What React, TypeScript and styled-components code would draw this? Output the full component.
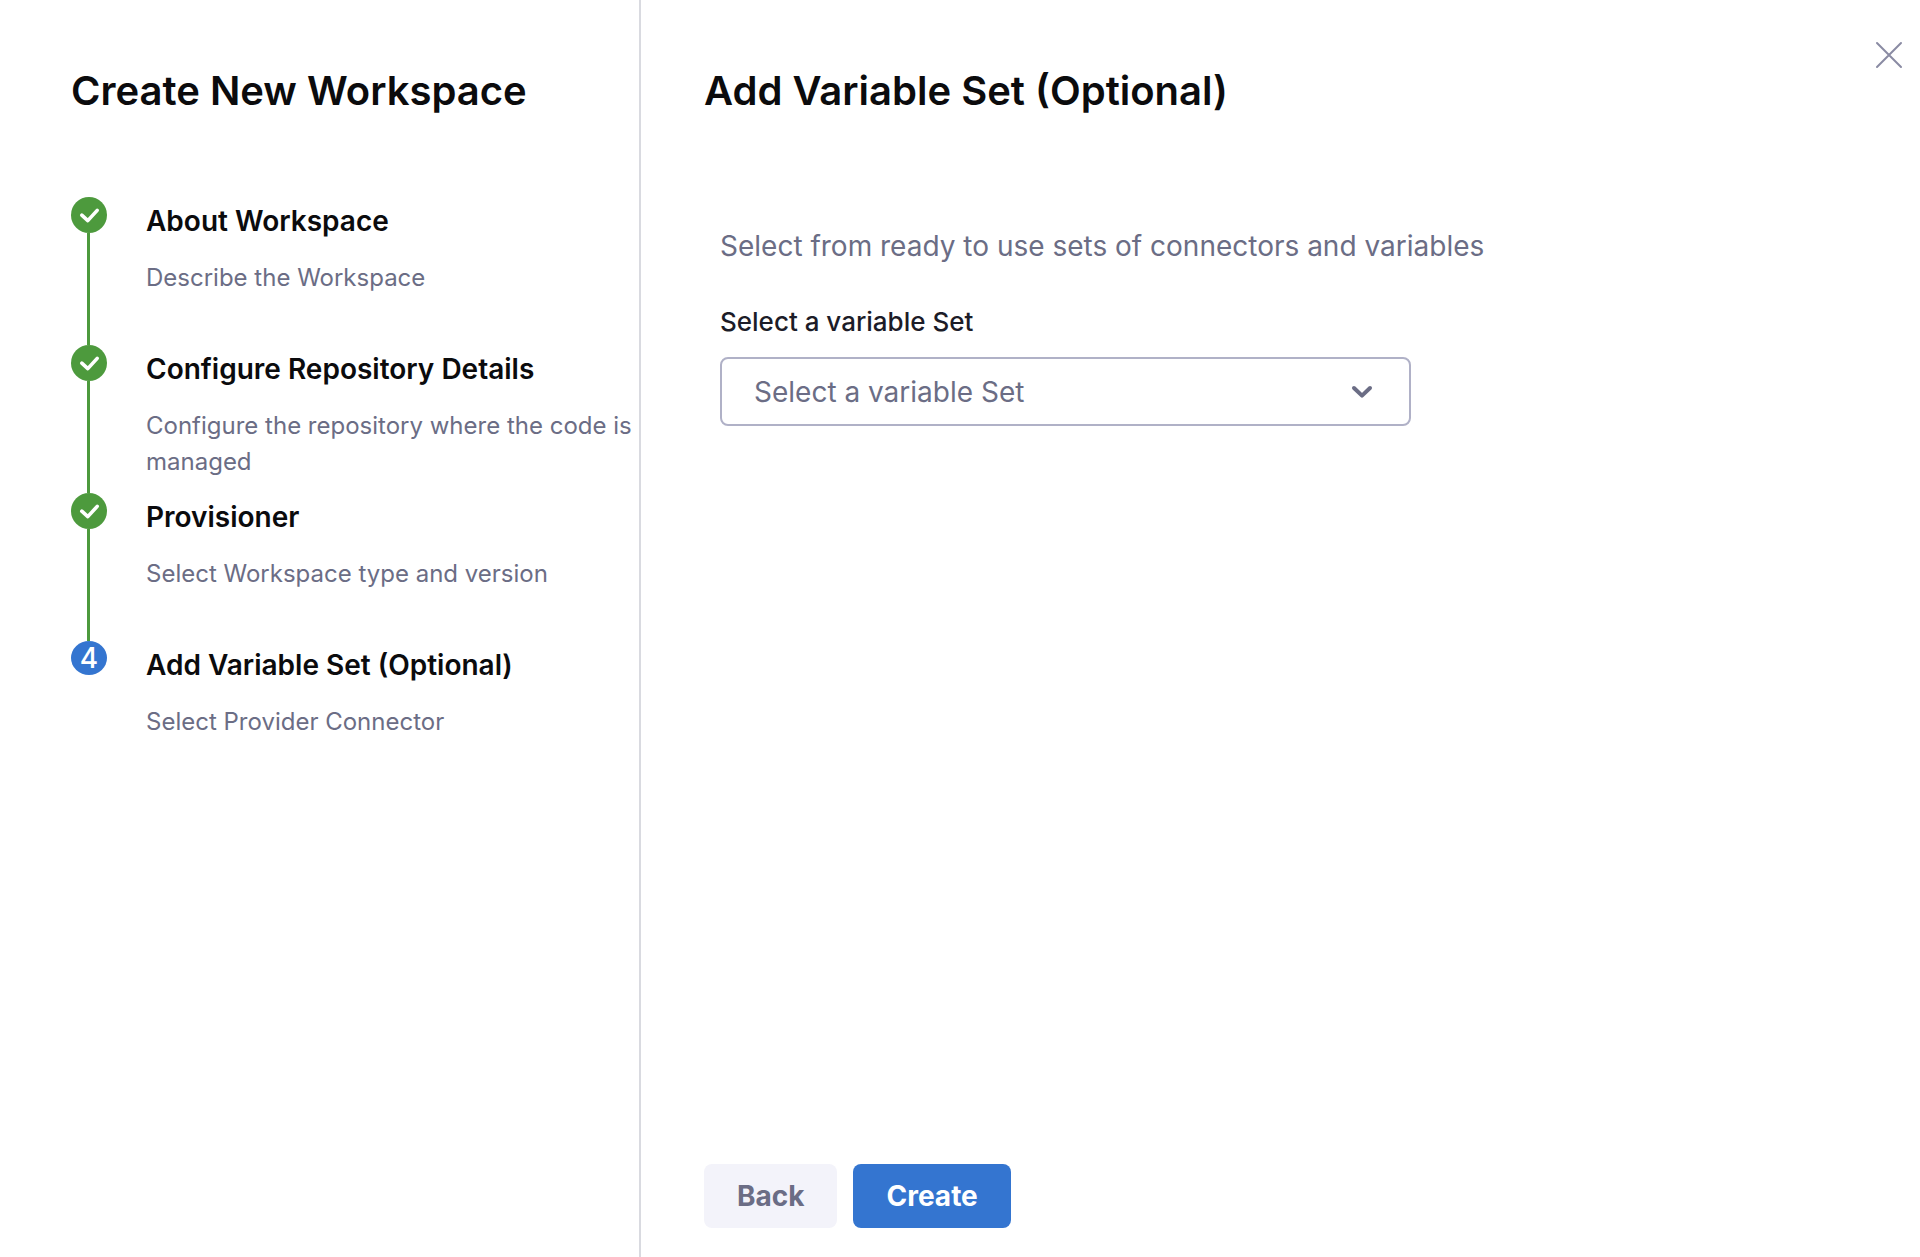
import React from "react";
import styled, { createGlobalStyle } from "styled-components";

const GlobalStyle = createGlobalStyle`
  *, *::before, *::after { box-sizing: border-box; }
  body {
    margin: 0;
    background: #ffffff;
    color: #0b0b0d;
    font-family: Inter, "Liberation Sans", sans-serif;
  }
`;

const Page = styled.div`
  display: flex;
  min-height: 100vh;
`;

const Sidebar = styled.aside`
  flex: 0 0 calc(100% / 3 + 1px);
  padding: 67px 0 48px 71px;
  border-right: 2px solid #d9dae0;
`;

const Heading = styled.h1`
  margin: 0;
  font-size: 40px;
  line-height: 48px;
  font-weight: 600;
`;

const Steps = styled.ol`
  list-style: none;
  margin: 82px 0 0;
  padding: 0;
`;

const Step = styled.li`
  display: flex;
  gap: 39px;
  min-height: 148px;
`;

const Rail = styled.div`
  flex: 0 0 36px;
  display: flex;
  flex-direction: column;
  align-items: center;
`;

const Marker = styled.span<{ $current?: boolean }>`
  display: flex;
  align-items: center;
  justify-content: center;
  width: 36px;
  height: ${(p) => (p.$current ? 34 : 36)}px;
  border-radius: 50%;
  background: ${(p) => (p.$current ? "#3475d0" : "#4d9a3d")};
  color: #ffffff;
  font-size: 28px;
  line-height: 34px;
  font-weight: 500;
`;

const Connector = styled.span`
  flex: 1;
  width: 3px;
  margin-right: 1px;
  background: #4d9a3d;
`;

const StepText = styled.div`
  flex: 1;
  padding-top: 6px;
`;

const StepTitle = styled.h2`
  margin: 0 0 21px;
  font-size: 28px;
  line-height: 36px;
  font-weight: 600;
`;

const StepDescription = styled.p`
  margin: 0;
  font-size: 24px;
  line-height: 36px;
  color: #6b6d85;
`;

const Main = styled.main`
  flex: 1;
  display: flex;
  flex-direction: column;
  padding: 67px 64px 29px 63px;
`;

const CloseButton = styled.button`
  position: absolute;
  top: 40px;
  right: 16px;
  display: flex;
  padding: 0;
  border: 0;
  background: none;
  color: #8a8ba3;
  cursor: pointer;
`;

const Form = styled.form`
  flex: 1;
  display: flex;
  flex-direction: column;
`;

const Fields = styled.div`
  flex: 1;
  padding: 113px 0 48px 16px;
`;

const Intro = styled.p`
  margin: 0 0 40px;
  font-size: 28px;
  line-height: 36px;
  color: #6b6d85;
`;

const FieldLabel = styled.label`
  display: block;
  margin-bottom: 17px;
  font-size: 26px;
  line-height: 36px;
  font-weight: 500;
  color: #1c1c28;
`;

const SelectBox = styled.div`
  position: relative;
  max-width: 691px;

  svg {
    position: absolute;
    top: 28px;
    right: 37px;
    pointer-events: none;
  }
`;

const Select = styled.select`
  appearance: none;
  display: block;
  width: 100%;
  height: 69px;
  padding: 0 80px 0 32px;
  border: 2px solid #b0b1c7;
  border-radius: 8px;
  background: #ffffff;
  color: #6b6d85;
  font: 400 28px Inter, "Liberation Sans", sans-serif;
`;

const Footer = styled.footer`
  display: flex;
  gap: 16px;
`;

const Button = styled.button<{ $primary?: boolean }>`
  height: 64px;
  padding: 0 33px;
  border: 0;
  border-radius: 8px;
  background: ${(p) => (p.$primary ? "#3475d0" : "#f3f3fa")};
  color: ${(p) => (p.$primary ? "#ffffff" : "#6b6d85")};
  font: 700 28px Inter, "Liberation Sans", sans-serif;
  cursor: pointer;
`;

const steps = [
  { title: "About Workspace", description: "Describe the Workspace", done: true },
  {
    title: "Configure Repository Details",
    description: "Configure the repository where the code is managed",
    done: true,
  },
  { title: "Provisioner", description: "Select Workspace type and version", done: true },
  { title: "Add Variable Set (Optional)", description: "Select Provider Connector", done: false },
];

const CheckIcon = () => (
  <svg width="36" height="36" viewBox="0 0 36 36" fill="none" aria-hidden="true">
    <path
      d="M10.8 18.2L16.8 23.6L26.2 13.4"
      stroke="currentColor"
      strokeWidth="3.6"
      strokeLinecap="round"
      strokeLinejoin="round"
    />
  </svg>
);

export default function App() {
  return (
    <Page>
      <GlobalStyle />
      <Sidebar>
        <Heading>Create New Workspace</Heading>
        <Steps>
          {steps.map((step, i) => (
            <Step key={step.title} aria-current={step.done ? undefined : "step"}>
              <Rail>
                <Marker $current={!step.done}>{step.done ? <CheckIcon /> : i + 1}</Marker>
                {step.done && <Connector />}
              </Rail>
              <StepText>
                <StepTitle>{step.title}</StepTitle>
                <StepDescription>{step.description}</StepDescription>
              </StepText>
            </Step>
          ))}
        </Steps>
      </Sidebar>
      <Main>
        <Heading as="h2">Add Variable Set (Optional)</Heading>
        <Form onSubmit={(e) => e.preventDefault()}>
          <Fields>
            <Intro>Select from ready to use sets of connectors and variables</Intro>
            <FieldLabel htmlFor="variable-set">Select a variable Set</FieldLabel>
            <SelectBox>
              <Select id="variable-set">
                <option>Select a variable Set</option>
              </Select>
              <svg width="24" height="14" viewBox="0 0 24 14" fill="none" aria-hidden="true">
                <path
                  d="M4 3L12 10.6L20 3"
                  stroke="#6b6d85"
                  strokeWidth="4"
                  strokeLinecap="round"
                  strokeLinejoin="round"
                />
              </svg>
            </SelectBox>
          </Fields>
          <Footer>
            <Button type="button">Back</Button>
            <Button type="submit" $primary>
              Create
            </Button>
          </Footer>
        </Form>
      </Main>
      <CloseButton type="button" aria-label="Close">
        <svg width="30" height="30" viewBox="0 0 30 30" fill="none" aria-hidden="true">
          <path
            d="M3 3L27 27M27 3L3 27"
            stroke="currentColor"
            strokeWidth="2"
            strokeLinecap="round"
          />
        </svg>
      </CloseButton>
    </Page>
  );
}
